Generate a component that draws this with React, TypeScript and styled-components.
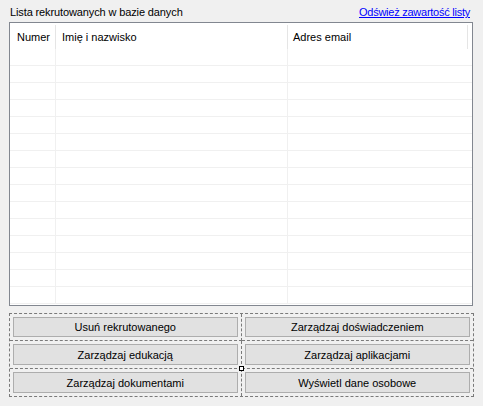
import React from "react";
import styled, { createGlobalStyle } from "styled-components";

const Global = createGlobalStyle`
  html, body { margin: 0; padding: 0; background: #f0f0f0; }
  body {
    font-family: "Liberation Sans", Arial, sans-serif;
    font-size: 11px;
    color: #000;
  }
  * { box-sizing: border-box; }
`;

const Page = styled.div`
  width: 483px;
  height: 406px;
  padding: 0 10px 0 9px;
  display: flex;
  flex-direction: column;
`;

const TopBar = styled.div`
  height: 22px;
  display: flex;
  align-items: flex-end;
  justify-content: space-between;
  padding-bottom: 3px;
  line-height: 13px;
`;

const Title = styled.span`
  padding-left: 1px;
  letter-spacing: -0.12px;
`;

const RefreshLink = styled.a`
  color: #0000ff;
  text-decoration: underline;
  padding-right: 3px;
  letter-spacing: -0.25px;
  cursor: pointer;
`;

const ListView = styled.div`
  height: 284px;
  border: 1px solid #828790;
  background: #fff;
  overflow: hidden;
`;

const COLS = "46px 232px 180px 1fr";

const HeaderRow = styled.div`
  display: grid;
  grid-template-columns: ${COLS};
  height: 26px;
`;

const HeaderCell = styled.div<{ $sep?: boolean; $pad?: number }>`
  position: relative;
  padding-left: ${(p) => p.$pad ?? 6}px;
  padding-top: 4px;
  line-height: 20px;
  white-space: nowrap;
  &::after {
    content: "";
    display: ${(p) => (p.$sep ? "block" : "none")};
    position: absolute;
    right: 0;
    top: 2px;
    bottom: 0;
    width: 1px;
    background: #e5e5e5;
  }
`;

const Row = styled.div`
  display: grid;
  grid-template-columns: ${COLS};
  height: 17px;
  border-bottom: 1px solid #f0f0f0;
`;

const Cell = styled.div<{ $line?: boolean }>`
  border-right: ${(p) => (p.$line ? "1px solid #f0f0f0" : "none")};
`;

const ButtonPanel = styled.div`
  position: relative;
  margin-top: 7px;
  width: 465px;
  height: 84px;
  border: 1px dashed #7a7a7a;
  display: grid;
  grid-template-columns: 1fr 1fr;
  grid-template-rows: 27px 28px 27px;
`;

const PanelCell = styled.div<{ $right?: boolean; $bottom?: boolean }>`
  padding: 3px;
  border-right: ${(p) => (p.$right ? "1px dashed #7a7a7a" : "none")};
  border-bottom: ${(p) => (p.$bottom ? "1px dashed #7a7a7a" : "none")};
  display: flex;
`;

const FormButton = styled.button`
  flex: 1;
  margin: 0;
  padding: 0;
  background: #e1e1e1;
  border: 1px solid #adadad;
  border-radius: 0;
  font-family: "Liberation Sans", Arial, sans-serif;
  font-size: 11px;
  color: #000;
  text-align: center;
`;

const Handle = styled.div`
  position: absolute;
  left: 229px;
  top: 52px;
  width: 5px;
  height: 5px;
  background: #fff;
  border: 1px solid #000;
`;

const buttons = [
  "Usuń rekrutowanego",
  "Zarządzaj doświadczeniem",
  "Zarządzaj edukacją",
  "Zarządzaj aplikacjami",
  "Zarządzaj dokumentami",
  "Wyświetl dane osobowe",
];

export default function App() {
  const rows = Array.from({ length: 15 });
  return (
    <>
      <Global />
      <Page>
        <TopBar>
          <Title>Lista rekrutowanych w bazie danych</Title>
          <RefreshLink>Odśwież zawartość listy</RefreshLink>
        </TopBar>
        <ListView>
          <HeaderRow>
            <HeaderCell $sep $pad={7}>Numer</HeaderCell>
            <HeaderCell $sep>Imię i nazwisko</HeaderCell>
            <HeaderCell $sep $pad={5}>Adres email</HeaderCell>
            <HeaderCell />
          </HeaderRow>
          {rows.map((_, i) => (
            <Row key={i}>
              <Cell $line />
              <Cell $line />
              <Cell />
              <Cell />
            </Row>
          ))}
        </ListView>
        <ButtonPanel>
          {buttons.map((label, i) => (
            <PanelCell key={label} $right={i % 2 === 0} $bottom={i < 4}>
              <FormButton>{label}</FormButton>
            </PanelCell>
          ))}
          <Handle />
        </ButtonPanel>
      </Page>
    </>
  );
}
